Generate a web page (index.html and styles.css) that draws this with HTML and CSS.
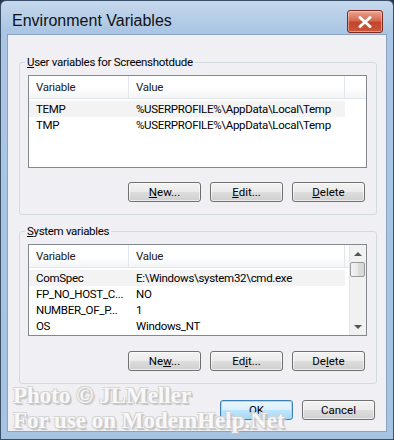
FILE: index.html
```html
<!DOCTYPE html>
<html>
<head>
<meta charset="utf-8">
<link rel="stylesheet" href="styles.css">
</head>
<body>
<div class="window">
  <div class="titlebar">
    <div class="title">Environment Variables</div>
    <div class="close"><svg width="16" height="12" viewBox="0 0 16 12"><path d="M3 1.5 L13 10.5 M13 1.5 L3 10.5" stroke="#fff" stroke-width="3" stroke-linecap="round"/></svg></div>
  </div>
  <div class="client">
    <fieldset class="group">
      <legend><u>U</u>ser variables for Screenshotdude</legend>
      <div class="list list-user">
        <div class="hdr"><div class="c1">Variable</div><div class="c2">Value</div><div class="c3"></div></div>
        <div class="rows">
          <div class="row hot"><div class="c1">TEMP</div><div class="c2">%USERPROFILE%\AppData\Local\Temp</div></div>
          <div class="row"><div class="c1">TMP</div><div class="c2">%USERPROFILE%\AppData\Local\Temp</div></div>
        </div>
      </div>
      <div class="btns">
        <button class="btn"><u>N</u>ew...</button>
        <button class="btn"><u>E</u>dit...</button>
        <button class="btn"><u>D</u>elete</button>
      </div>
    </fieldset>
    <fieldset class="group group2">
      <legend><u>S</u>ystem variables</legend>
      <div class="list list-sys">
        <div class="listmain">
          <div class="hdr"><div class="c1">Variable</div><div class="c2">Value</div><div class="c3"></div></div>
          <div class="rows">
            <div class="row hot"><div class="c1">ComSpec</div><div class="c2">E:\Windows\system32\cmd.exe</div></div>
            <div class="row"><div class="c1">FP_NO_HOST_C...</div><div class="c2">NO</div></div>
            <div class="row"><div class="c1">NUMBER_OF_P...</div><div class="c2">1</div></div>
            <div class="row"><div class="c1">OS</div><div class="c2">Windows_NT</div></div>
          </div>
        </div>
        <div class="scroll">
          <div class="arrow up"></div>
          <div class="thumb"></div>
          <div class="track"></div>
          <div class="arrow down"></div>
        </div>
      </div>
      <div class="btns">
        <button class="btn">Ne<u>w</u>...</button>
        <button class="btn">Ed<u>i</u>t...</button>
        <button class="btn">De<u>l</u>ete</button>
      </div>
    </fieldset>
    <div class="footer">
      <button class="btn default">OK</button>
      <button class="btn">Cancel</button>
    </div>
  </div>
  <div class="watermark">
    <div class="wm1">Photo © JLMeller</div>
    <div class="wm2">For use on ModemHelp.Net</div>
  </div>
</div>
</body>
</html>
```
FILE: styles.css
```css
html, body {
  margin: 0;
  padding: 0;
  background: #26364b;
}
body {
  width: 394px;
  height: 440px;
  overflow: hidden;
}
.window {
  position: relative;
  width: 394px;
  height: 440px;
  box-sizing: border-box;
  border: 1px solid #3a4f68;
  border-radius: 6px 6px 0 0;
  background: linear-gradient(180deg, #c6d8ec 0px, #aac6e4 30px, #a6c3e2 100%);
  display: flex;
  flex-direction: column;
  padding: 0 6px 7px 6px;
  font-family: Roboto, "Liberation Sans", sans-serif;
}
.titlebar {
  height: 33px;
  flex: none;
  display: flex;
  align-items: flex-start;
  justify-content: space-between;
}
.title {
  font-family: "Liberation Sans", Arial, sans-serif;
  font-size: 16px;
  color: #111;
  margin: 11px 0 0 5px;
}
.close {
  margin: 9px 4px 0 0;
  width: 36px;
  height: 23px;
  box-sizing: border-box;
  border: 1px solid #7a2a1e;
  border-radius: 3px;
  background: linear-gradient(180deg, #eba594 0%, #d56a50 45%, #c2452b 55%, #c9583c 100%);
  box-shadow: inset 0 0 0 1px rgba(255,220,210,0.5);
  display: flex;
  align-items: center;
  justify-content: center;
}
.client {
  flex: 1;
  background: #f0eff3;
  border: 1px solid #8aa3bf;
  display: flex;
  flex-direction: column;
  font-size: 11.5px;
  letter-spacing: -0.3px;
  color: #000;
}
.group {
  margin: 20px 9px 0 11px;
  padding: 5px 9px 12px 8px;
  border: 1px solid #d3dbe2;
  border-radius: 3px;
  min-width: 0;
}
.group2 {
  margin-top: 9px;
}
legend {
  padding: 0 2px;
  margin-left: -3px;
  line-height: 15px;
  font-size: 11.5px;
  color: #000;
}
.list {
  border: 1px solid #828790;
  background: #fff;
  overflow: hidden;
}
.list-user {
  height: 91px;
}
.list-sys {
  height: 90px;
  display: flex;
}
.listmain {
  flex: 1;
  min-width: 0;
}
.hdr {
  display: flex;
  height: 23px;
  box-sizing: border-box;
  border-bottom: 1px solid #e3e6ea;
  background: linear-gradient(180deg, #ffffff 0%, #ffffff 50%, #f4f5f7 100%);
  color: #222;
}
.hdr > div {
  display: flex;
  align-items: center;
  box-sizing: border-box;
  padding-left: 7px;
  border-right: 1px solid #e3e6ea;
  flex: none;
}
.hdr .c1 { width: 100px; }
.hdr .c2 { width: 216px; }
.hdr .c3 { flex: 1; border-right: none; }
.rows {
  padding-top: 2px;
}
.row {
  display: flex;
  height: 16px;
  align-items: center;
  width: 316px;
}
.row.hot {
  background: #f3f3f4;
}
.row .c1 {
  width: 100px;
  flex: none;
  box-sizing: border-box;
  padding-left: 7px;
  white-space: nowrap;
}
.row .c2 {
  padding-left: 7px;
  white-space: nowrap;
}
.scroll {
  width: 17px;
  flex: none;
  display: flex;
  flex-direction: column;
  background: #f1f1f1;
  border-left: 1px solid #e6e6e6;
  box-sizing: border-box;
}
.arrow {
  height: 17px;
  flex: none;
  display: flex;
  align-items: center;
  justify-content: center;
}
.arrow::before {
  content: "";
  width: 0;
  height: 0;
  border-left: 4px solid transparent;
  border-right: 4px solid transparent;
}
.arrow.up::before { border-bottom: 4px solid #555; }
.arrow.down::before { border-top: 4px solid #555; }
.thumb {
  height: 15px;
  flex: none;
  margin: 0 1px 0 0;
  border: 1px solid #9a9a9a;
  border-radius: 2px;
  background: linear-gradient(90deg, #f4f4f4 0%, #e8e8e8 50%, #dcdcdc 51%, #d6d6d6 100%);
  box-sizing: border-box;
}
.track { flex: 1; }
.btns {
  display: flex;
  justify-content: flex-end;
  gap: 9px;
  margin-top: 14px;
  padding-right: 2px;
}
.group2 .btns {
  margin-top: 15px;
}
.btn {
  width: 73px;
  height: 20px;
  box-sizing: border-box;
  padding: 0;
  border: 1px solid #707070;
  border-radius: 3px;
  background: linear-gradient(180deg, #f3f3f3 0%, #ebebeb 48%, #dddddd 52%, #cfcfcf 100%);
  box-shadow: inset 0 0 0 1px rgba(255,255,255,0.6);
  font-family: Roboto, "Liberation Sans", sans-serif;
  font-size: 11.5px;
  line-height: 16px;
  color: #000;
}
.btn u {
  text-underline-offset: 1px;
}
.footer {
  display: flex;
  justify-content: flex-end;
  gap: 9px;
  margin-top: 16px;
  padding-right: 11px;
}
.btn.default {
  border-color: #3c7fb1;
  box-shadow: inset 0 0 0 1px #9fdcf8;
  background: linear-gradient(180deg, #eaf6fd 0%, #d9f0fc 48%, #bee6fd 52%, #a7d9f5 100%);
}
.watermark {
  position: absolute;
  left: 12px;
  top: 382px;
  font-family: "Liberation Serif", serif;
  font-weight: bold;
  font-size: 23px;
  line-height: 25px;
  color: #fafafa;
  text-shadow: 1px 1px 0 #c4c4c4, -1px -1px 0 #d4d4d4, 1px -1px 0 #d4d4d4, -1px 1px 0 #d4d4d4, 2px 2px 1px #bdbdbd;
  opacity: 0.9;
  pointer-events: none;
  white-space: nowrap;
}
.wm1 { letter-spacing: 0; }
.wm2 { letter-spacing: 0; }
```
